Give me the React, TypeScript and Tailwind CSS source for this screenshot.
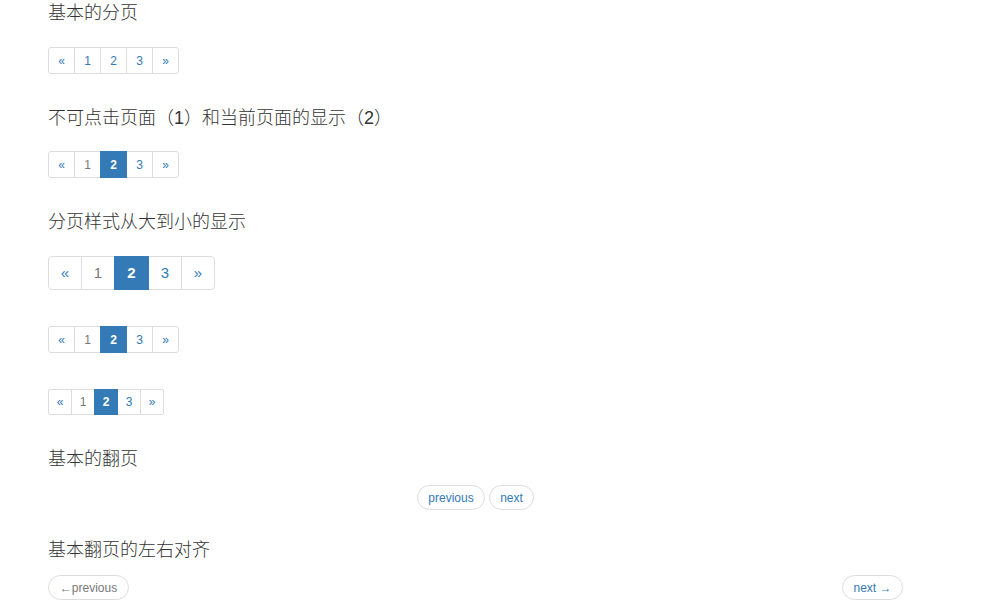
import React from "react";

type Item = { label: string; active?: boolean; disabled?: boolean };

const items = (disableFirst: boolean, active: boolean): Item[] => [
  { label: "«" },
  { label: "1", disabled: disableFirst },
  { label: "2", active },
  { label: "3" },
  { label: "»" },
];

const sizes = {
  lg: { box: "w-[34px] h-[34px] text-[15px]", active: "w-[35px]", arrow: "text-[15px]", first: "rounded-l-[4px]", last: "rounded-r-[4px]" },
  md: { box: "w-[27px] h-[27px] text-[12px]", active: "w-[27px]", arrow: "text-[11px]", first: "rounded-l-[3px]", last: "rounded-r-[3px]" },
  sm: { box: "w-[24px] h-[26px] text-[12px]", active: "w-[24px]", arrow: "text-[10px]", first: "rounded-l-[2px]", last: "rounded-r-[2px]" },
};

const Pagination = ({ list, size = "md", className = "" }: { list: Item[]; size?: keyof typeof sizes; className?: string }) => {
  const s = sizes[size];
  return (
    <ul className={`flex ${className}`}>
      {list.map((it, i) => {
        const isArrow = it.label === "«" || it.label === "»";
        const color = it.active
          ? "bg-[#337ab7] border-[#337ab7] text-white font-bold z-10"
          : it.disabled
          ? "bg-white border-[#ddd] text-[#777]"
          : "bg-white border-[#ddd] text-[#337ab7]";
        return (
          <li
            key={i}
            className={`flex items-center justify-center border ${s.box} ${it.label === "2" ? s.active : ""} ${color} ${
              isArrow ? s.arrow : ""
            } ${i > 0 ? "-ml-px" : ""} ${i === 0 ? s.first : ""} ${i === list.length - 1 ? s.last : ""}`}
          >
            {it.label}
          </li>
        );
      })}
    </ul>
  );
};

const Heading = ({ children, className = "" }: { children: React.ReactNode; className?: string }) => (
  <h3 className={`h-[26px] leading-[26px] text-[18px] font-light text-[#333] ${className}`}>{children}</h3>
);

const PagerBtn = ({ children, w, muted }: { children: React.ReactNode; w: string; muted?: boolean }) => (
  <span
    className={`flex items-center justify-center h-[25px] ${w} rounded-[15px] border border-[#ddd] bg-white text-[12px] ${
      muted ? "text-[#777]" : "text-[#337ab7]"
    }`}
  >
    {children}
  </span>
);

export default function App() {
  return (
    <div
      className="min-h-screen bg-white"
      style={{ fontFamily: '"Liberation Sans", Arial, "Noto Sans CJK SC", sans-serif' }}
    >
      <div className="ml-[48px] w-[855px]">
        <Heading>基本的分页</Heading>
        <Pagination list={items(false, false)} className="mt-[21px]" />

        <Heading className="mt-[31px]">不可点击页面（1）和当前页面的显示（2）</Heading>
        <Pagination list={items(true, true)} className="mt-[20px]" />

        <Heading className="mt-[31px]">分页样式从大到小的显示</Heading>
        <Pagination list={items(true, true)} size="lg" className="mt-[21px]" />
        <Pagination list={items(true, true)} size="md" className="mt-[36px]" />
        <Pagination list={items(true, true)} size="sm" className="mt-[36px]" />

        <Heading className="mt-[31px]">基本的翻页</Heading>
        <div className="mt-[13px] flex justify-center gap-[4px]">
          <PagerBtn w="w-[68px]">previous</PagerBtn>
          <PagerBtn w="w-[45px]">next</PagerBtn>
        </div>

        <Heading className="mt-[27px]">基本翻页的左右对齐</Heading>
        <div className="mt-[12px] flex justify-between">
          <PagerBtn w="w-[81px]" muted>
            ←previous
          </PagerBtn>
          <PagerBtn w="w-[61px]">next →</PagerBtn>
        </div>
      </div>
    </div>
  );
}
